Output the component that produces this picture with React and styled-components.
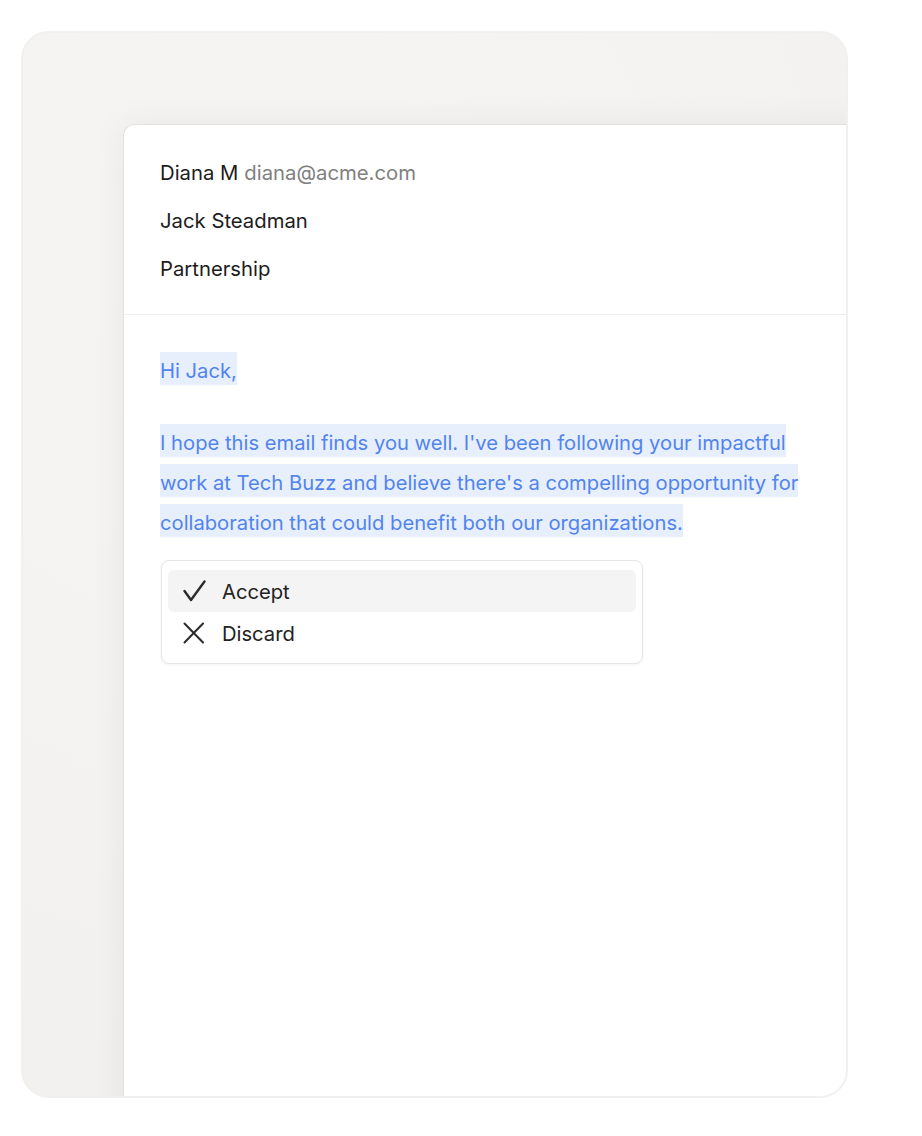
import React from 'react';
import styled, { createGlobalStyle } from 'styled-components';

const Global = createGlobalStyle`
  html, body {
    margin: 0;
    background: #ffffff;
    font-family: Inter, "Noto Sans", "Liberation Sans", sans-serif;
  }
`;

const Page = styled.div`
  padding: 31px 0 0 21px;
`;

const Frame = styled.div`
  box-sizing: border-box;
  width: 827px;
  height: 1067px;
  border: 2px solid #f1f0ee;
  border-radius: 28px;
  background: radial-gradient(circle at 30% 20%, #f6f5f3 0%, #f3f2f0 60%, #f1f0ee 100%);
  overflow: hidden;
  padding: 91px 0 0 100px;
`;

const Card = styled.div`
  width: 760px;
  height: 1100px;
  background: #ffffff;
  border-top: 1px solid #e2e1de;
  border-left: 1px solid #e2e1de;
  border-top-left-radius: 12px;
  box-shadow: 0 0 36px rgba(0, 0, 0, 0.06);
`;

const Header = styled.div`
  display: flex;
  flex-direction: column;
  padding: 23px 36px 22px;
  border-bottom: 1px solid #eeeeee;
`;

const HeaderRow = styled.div`
  height: 48px;
  display: flex;
  align-items: center;
  gap: 6px;
  font-size: 20.3px;
  color: #1c1c1c;
`;

const Muted = styled.span`
  color: #808080;
`;

const Body = styled.div`
  padding: 36px 36px 0;
`;

const Para = styled.p`
  max-width: 660px;
  margin: 0 0 32px;
  font-size: 20.2px;
  line-height: 40px;
  color: #5284ee;
  &:last-of-type {
    margin-bottom: 17px;
  }
`;

const Mark = styled.span`
  background: #e7effd;
  padding: 6px 0 2px;
  box-decoration-break: clone;
  -webkit-box-decoration-break: clone;
`;

const Menu = styled.div`
  width: 482px;
  box-sizing: border-box;
  margin-left: 1px;
  padding: 9px 6px;
  border: 1px solid #e6e6e6;
  border-radius: 8px;
  background: #fff;
  box-shadow: 0 1px 3px rgba(0, 0, 0, 0.05);
  display: flex;
  flex-direction: column;
`;

const Item = styled.div`
  height: 42px;
  display: flex;
  align-items: center;
  gap: 16px;
  padding-left: 14px;
  border-radius: 6px;
  font-size: 20.2px;
  color: #222;
  background: ${(p) => (p.$active ? '#f4f4f4' : 'transparent')};
`;

const Icon = styled.svg`
  width: 24px;
  height: 24px;
  flex: none;
  fill: none;
  stroke: #2b2b2b;
  stroke-linecap: round;
  stroke-linejoin: round;
`;

const CheckIcon = () => (
  <Icon viewBox="0 0 24 24" strokeWidth="2.4">
    <path d="M2.5 12 L9 21 L22.5 2.5" />
  </Icon>
);

const CrossIcon = () => (
  <Icon viewBox="0 0 24 24" strokeWidth="2">
    <path d="M2.5 2.5 L21 21.5 M21 2.5 L2.5 21.5" />
  </Icon>
);

export default function App() {
  return (
    <>
      <Global />
      <Page>
        <Frame>
          <Card>
            <Header>
              <HeaderRow>
                Diana M <Muted>diana@acme.com</Muted>
              </HeaderRow>
              <HeaderRow>Jack Steadman</HeaderRow>
              <HeaderRow>Partnership</HeaderRow>
            </Header>
            <Body>
              <Para>
                <Mark>Hi Jack,</Mark>
              </Para>
              <Para>
                <Mark>
                  I hope this email finds you well. I've been following your impactful work at
                  Tech Buzz and believe there's a compelling opportunity for collaboration that
                  could benefit both our organizations.
                </Mark>
              </Para>
              <Menu>
                <Item $active>
                  <CheckIcon />
                  Accept
                </Item>
                <Item>
                  <CrossIcon />
                  Discard
                </Item>
              </Menu>
            </Body>
          </Card>
        </Frame>
      </Page>
    </>
  );
}
